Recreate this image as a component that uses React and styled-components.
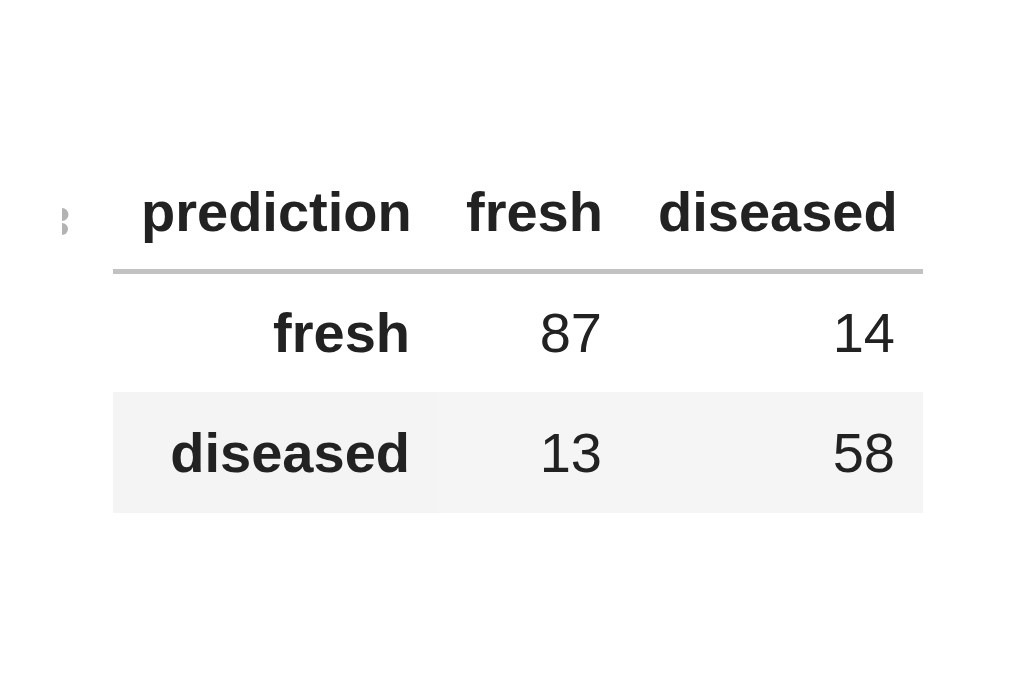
import React from "react"
import styled, { createGlobalStyle } from "styled-components"

const GlobalStyle = createGlobalStyle`
  html, body {
    margin: 0;
    padding: 0;
    background: #fff;
  }
  body {
    font-family: "Liberation Sans", Arial, Helvetica, sans-serif;
    color: #222;
  }
`

const Page = styled.div`
  width: 1024px;
  height: 682px;
  display: flex;
  align-items: flex-start;
  padding-top: 155px;
  box-sizing: border-box;
`

const Gutter = styled.div`
  width: 113px;
  padding: 53px 0 0 62px;
  box-sizing: border-box;
`

const Table = styled.table`
  border-collapse: collapse;
  border-spacing: 0;
  font-size: 56px;
  table-layout: fixed;
  width: 810px;
`

const HeadCell = styled.th`
  height: 116px;
  padding: 0 28px;
  text-align: ${(p) => p.$align || "right"};
  font-weight: 700;
  line-height: 64px;
  white-space: nowrap;
  vertical-align: middle;
  box-sizing: border-box;
`

const HeadRow = styled.tr`
  border-bottom: 5px solid #c2c2c2;
`

const BodyRow = styled.tr`
  background: ${(p) => (p.$striped ? "#f5f5f5" : "transparent")};
`

const IndexCell = styled.th`
  height: ${(p) => p.$h}px;
  padding: 0 28px;
  text-align: right;
  font-weight: 700;
  line-height: 64px;
  white-space: nowrap;
  vertical-align: middle;
  box-sizing: border-box;
  background: ${(p) => (p.$striped ? "#f4f4f4" : "transparent")};
`

const ValueCell = styled.td`
  padding: 0 28px;
  text-align: right;
  font-weight: 400;
  line-height: 64px;
  vertical-align: middle;
`

function Handle() {
  return (
    <svg width="12" height="28" viewBox="0 0 12 28">
      <path d="M0 0 A6.5 6.5 0 0 1 0 13 Z" fill="#b3b3b3" />
      <path d="M0 15 A6 6 0 0 1 0 27 Z" fill="#b3b3b3" />
    </svg>
  )
}

const rows = [
  { label: "fresh", values: [87, 14], h: 121 },
  { label: "diseased", values: [13, 58], h: 121 },
]

export default function App() {
  return (
    <Page>
      <GlobalStyle />
      <Gutter>
        <Handle />
      </Gutter>
      <Table>
        <colgroup>
          <col style={{ width: 325 }} />
          <col style={{ width: 192 }} />
          <col style={{ width: 293 }} />
        </colgroup>
        <thead>
          <HeadRow>
            <HeadCell>prediction</HeadCell>
            <HeadCell $align="left">fresh</HeadCell>
            <HeadCell $align="left">diseased</HeadCell>
          </HeadRow>
        </thead>
        <tbody>
          {rows.map((r, i) => (
            <BodyRow key={r.label} $striped={i % 2 === 1}>
              <IndexCell $h={r.h} $striped={i % 2 === 1}>
                {r.label}
              </IndexCell>
              {r.values.map((v, j) => (
                <ValueCell key={j}>{v}</ValueCell>
              ))}
            </BodyRow>
          ))}
        </tbody>
      </Table>
    </Page>
  )
}
